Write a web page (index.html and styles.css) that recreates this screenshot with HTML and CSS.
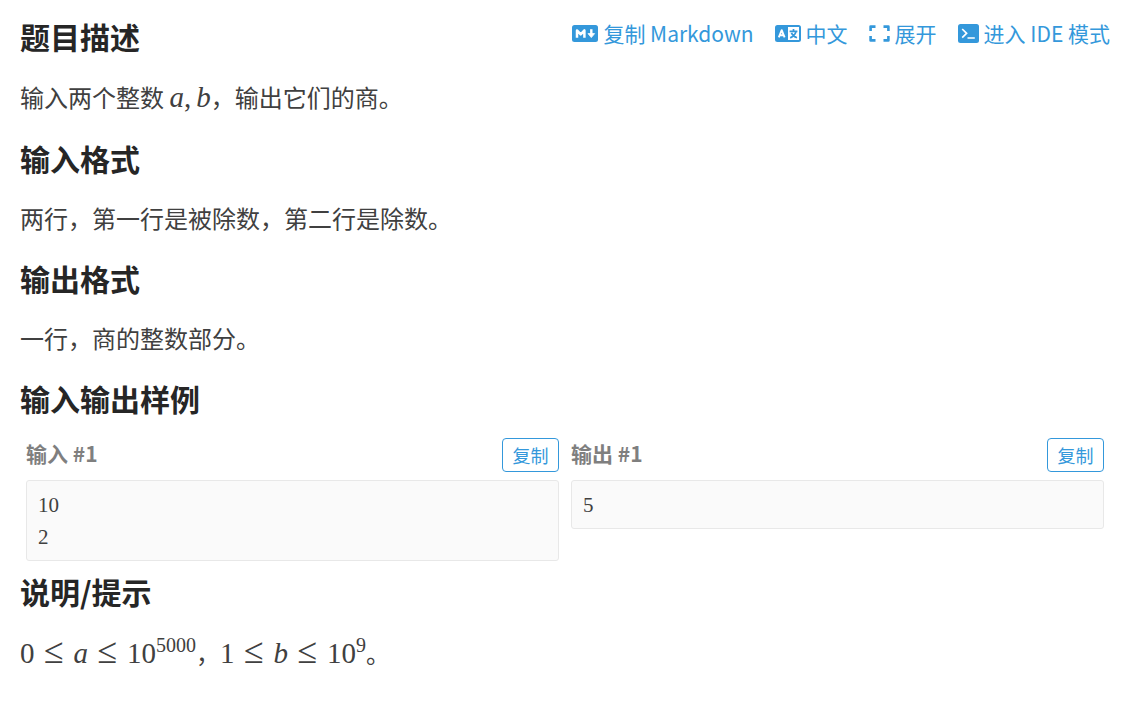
FILE: index.html
```html
<!DOCTYPE html>
<html lang="zh-CN">
<head>
    <meta charset="UTF-8">
    <meta name="viewport" content="width=device-width, initial-scale=1.0">
    <title>题目描述</title>
    <link rel="stylesheet" href="styles.css">
</head>
<body>

    <main class="problem">
        <!-- Title row with actions -->
        <header class="problem-header">
            <h2 class="title">题目描述</h2>
            <nav class="actions">
                <a class="action" href="#">
                    <svg class="icon" width="26" height="17" viewBox="0 0 26 17">
                        <rect width="26" height="17" rx="2.5" fill="#3498db"/>
                        <path d="M5 12.8V5.4L8.7 9.4L12.4 5.4V12.8" fill="none" stroke="#fff" stroke-width="2.5" stroke-linejoin="round"/>
                        <path d="M19.3 4.2V10" stroke="#fff" stroke-width="2.4"/>
                        <path d="M16 8.6H22.6L19.3 12.6Z" fill="#fff" stroke="#fff" stroke-width="0.8" stroke-linejoin="round"/>
                    </svg>
                    复制 Markdown
                </a>
                <a class="action" href="#">
                    <svg class="icon" width="26" height="17" viewBox="0 0 26 17">
                        <rect width="26" height="17" rx="2.5" fill="#3498db"/>
                        <rect x="13" y="2" width="11" height="13" fill="#fff"/>
                        <path d="M3.8 12.4L6.7 5.2L9.6 12.4M5 10.2H8.4" fill="none" stroke="#fff" stroke-width="1.9" stroke-linejoin="round"/>
                        <path d="M18.5 4V6M14.6 6.3H22.4M21 6.8C20 10 18 11.7 15.2 12.9M16.4 7.8C17.6 10.5 19.5 12 22 12.8" fill="none" stroke="#3498db" stroke-width="1.7"/>
                    </svg>
                    中文
                </a>
                <a class="action" href="#">
                    <svg class="icon" width="21" height="17" viewBox="0 0 21 17">
                        <path d="M6.5 1.6H1.6V6M1.6 11V15.4H6.5M14.5 1.6H19.4V6M19.4 11V15.4H14.5" fill="none" stroke="#3498db" stroke-width="2.6" stroke-linejoin="round"/>
                    </svg>
                    展开
                </a>
                <a class="action" href="#">
                    <svg class="icon" width="21" height="19" viewBox="0 0 21 19">
                        <rect width="21" height="19" rx="2.5" fill="#3498db"/>
                        <path d="M4.2 5L8.6 9.3L4.2 13.6M9.5 14H16.8" fill="none" stroke="#fff" stroke-width="1.7"/>
                    </svg>
                    进入 IDE 模式
                </a>
            </nav>
        </header>
        <p class="text">输入两个整数 <span class="math"><i>a</i>,<i class="next">b</i></span>，输出它们的商。</p>

        <h2 class="title">输入格式</h2>
        <p class="text">两行，第一行是被除数，第二行是除数。</p>

        <h2 class="title">输出格式</h2>
        <p class="text">一行，商的整数部分。</p>

        <!-- Samples -->
        <h2 class="title">输入输出样例</h2>
        <div class="samples">
            <section class="sample">
                <div class="sample-header">
                    <h3 class="sample-name">输入 #1</h3>
                    <button class="copy" type="button">复制</button>
                </div>
                <pre class="sample-data">10
2</pre>
            </section>
            <section class="sample">
                <div class="sample-header">
                    <h3 class="sample-name">输出 #1</h3>
                    <button class="copy" type="button">复制</button>
                </div>
                <pre class="sample-data">5</pre>
            </section>
        </div>

        <h2 class="title">说明/提示</h2>
        <p class="text"><span class="math">0<span class="rel">≤</span><i>a</i><span class="rel">≤</span>10<sup>5000</sup></span>，<span class="math">1<span class="rel">≤</span><i>b</i><span class="rel">≤</span>10<sup>9</sup></span>。</p>
    </main>

</body>
</html>
```
FILE: styles.css
```css
* {
    margin: 0;
    padding: 0;
    box-sizing: border-box;
}
body {
    background: #fff;
    color: #404040;
    font-family: 'Noto Sans CJK SC', sans-serif;
    font-size: 24px;
}
.problem {
    padding: 18px 31px 20px 20px;
}
.problem-header {
    display: flex;
    justify-content: space-between;
    align-items: flex-start;
}
.title {
    color: #262626;
    font-size: 30px;
    font-weight: bold;
    line-height: 36px;
}
.text {
    margin: 24px 0;
    line-height: 36px;
}
.actions {
    display: flex;
    gap: 21px;
}
.action {
    display: flex;
    align-items: center;
    gap: 5px;
    color: #3498db;
    font-size: 21px;
    line-height: 30px;
    text-decoration: none;
}
.icon {
    flex: none;
}

/* Math */
.math {
    font-family: 'Liberation Serif', serif;
    font-size: 29px;
    line-height: 38px;
}
.next {
    margin-left: 5px;
}
.rel {
    display: inline-block;
    width: 39px;
    font-size: 36px;
    line-height: 36px;
    text-align: center;
}
.math sup {
    font-size: 20px;
    line-height: 0;
    vertical-align: 11px;
}

/* Samples */
.samples {
    display: flex;
    align-items: flex-start;
    gap: 12px;
    margin: 22px 6px 12px;
}
.sample {
    flex: 1;
}
.sample-header {
    display: flex;
    justify-content: space-between;
    margin-bottom: 8px;
}
.sample-name {
    color: #7f7f7f;
    font-size: 21px;
    line-height: 30px;
}
.copy {
    min-width: 57px;
    height: 34px;
    padding: 0 9px;
    border: 1px solid #3498db;
    border-radius: 4px;
    background: #fff;
    color: #3498db;
    font-family: inherit;
    font-size: 18px;
    cursor: pointer;
}
.sample-data {
    padding: 8px 11px 7px;
    border: 1px solid #e8e8e8;
    border-radius: 3px;
    background: #fafafa;
    font-family: 'Liberation Serif', serif;
    font-size: 21px;
    line-height: 32px;
}
```
